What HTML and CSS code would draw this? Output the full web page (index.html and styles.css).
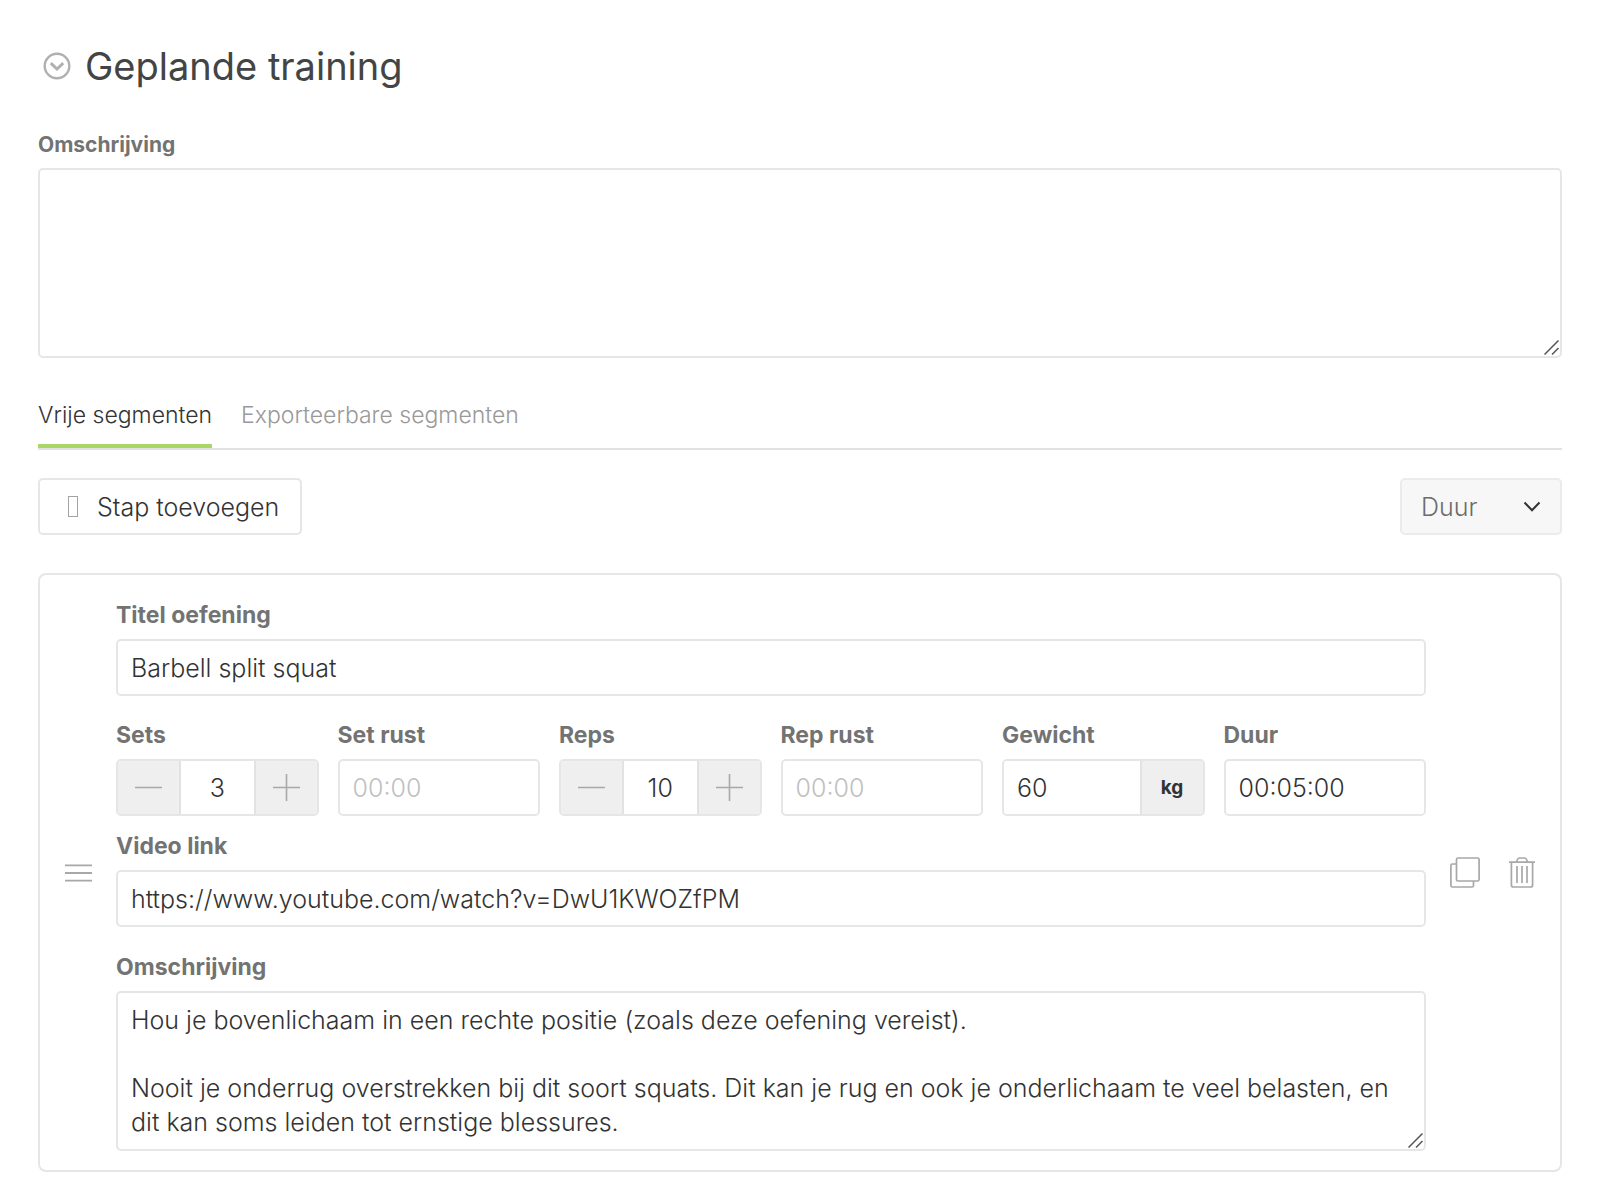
FILE: index.html
```html
<!DOCTYPE html>
<html lang="nl">
<head>
<meta charset="utf-8">
<meta name="viewport" content="width=device-width, initial-scale=1">
<title>Geplande training</title>
<link rel="stylesheet" href="styles.css">
</head>
<body>
<main class="page">
  <header class="heading">
    <button class="icon-button" type="button" aria-label="Inklappen">
      <svg width="28" height="28" viewBox="0 0 28 28" fill="none" stroke="#b0b0b0"><circle cx="14" cy="14" r="12.3" stroke-width="2.4"/><path d="M7.8 11.2l6.2 5.8 6.2-5.8" stroke-width="3"/></svg>
    </button>
    <h1 class="title">Geplande training</h1>
  </header>

  <div class="intro">
    <label class="label label-small" for="intro">Omschrijving</label>
    <div class="area-wrap">
      <textarea class="control area area-intro" id="intro"></textarea>
      <svg class="grip" width="15" height="15" viewBox="0 0 15 15" fill="none" stroke="#555" stroke-width="1.5"><path d="M.5 14.500L14.500.500M8 14.500L14.500 8"/></svg>
    </div>
  </div>

  <nav class="tabs">
    <a class="tab tab-active" href="#vrij">Vrije segmenten</a>
    <a class="tab" href="#exporteerbaar">Exporteerbare segmenten</a>
  </nav>

  <div class="toolbar">
    <button class="add" type="button"><span class="add-icon"></span>Stap toevoegen</button>
    <div class="select-wrap">
      <select class="select" aria-label="Type"><option>Duur</option></select>
      <svg class="chevron" width="18" height="12" viewBox="0 0 18 12" fill="none" stroke="#333" stroke-width="2"><path d="M1.500 1.500L9 9.300l7.500-7.800"/></svg>
    </div>
  </div>

  <section class="card">
    <button class="icon-button" type="button" aria-label="Verplaatsen">
      <svg width="27" height="18" viewBox="0 0 27 18" stroke="#a8a8a8" stroke-width="1.800"><path d="M0 1.300h27M0 9h27M0 16.700h27"/></svg>
    </button>
    <div class="fields">
      <div class="field">
        <label class="label" for="naam">Titel oefening</label>
        <input class="control" id="naam" type="text" value="Barbell split squat">
      </div>
      <div class="metrics">
        <div class="field">
          <label class="label" for="sets">Sets</label>
          <div class="group">
            <button class="step" type="button" aria-label="Minder sets"><svg width="27" height="27" viewBox="0 0 27 27" stroke="#a8a8a8" stroke-width="1.600"><path d="M0 13.500h27"/></svg></button>
            <input class="group-input centered" id="sets" type="text" value="3">
            <button class="step" type="button" aria-label="Meer sets"><svg width="27" height="27" viewBox="0 0 27 27" stroke="#a8a8a8" stroke-width="1.600"><path d="M0 13.500h27M13.500 0v27"/></svg></button>
          </div>
        </div>
        <div class="field">
          <label class="label" for="setrust">Set rust</label>
          <input class="control" id="setrust" type="text" placeholder="00:00">
        </div>
        <div class="field">
          <label class="label" for="reps">Reps</label>
          <div class="group">
            <button class="step" type="button" aria-label="Minder reps"><svg width="27" height="27" viewBox="0 0 27 27" stroke="#a8a8a8" stroke-width="1.600"><path d="M0 13.500h27"/></svg></button>
            <input class="group-input centered" id="reps" type="text" value="10">
            <button class="step" type="button" aria-label="Meer reps"><svg width="27" height="27" viewBox="0 0 27 27" stroke="#a8a8a8" stroke-width="1.600"><path d="M0 13.500h27M13.500 0v27"/></svg></button>
          </div>
        </div>
        <div class="field">
          <label class="label" for="reprust">Rep rust</label>
          <input class="control" id="reprust" type="text" placeholder="00:00">
        </div>
        <div class="field">
          <label class="label" for="gewicht">Gewicht</label>
          <div class="group">
            <input class="group-input" id="gewicht" type="text" value="60">
            <span class="step unit">kg</span>
          </div>
        </div>
        <div class="field">
          <label class="label" for="duur">Duur</label>
          <input class="control" id="duur" type="text" value="00:05:00">
        </div>
      </div>
      <div class="field field-video">
        <label class="label" for="video">Video link</label>
        <input class="control" id="video" type="text" value="https://www.youtube.com/watch?v=DwU1KWOZfPM">
      </div>
      <div class="field">
        <label class="label" for="uitleg">Omschrijving</label>
        <div class="area-wrap">
          <textarea class="control area" id="uitleg" rows="4">Hou je bovenlichaam in een rechte positie (zoals deze oefening vereist).

Nooit je onderrug overstrekken bij dit soort squats. Dit kan je rug en ook je onderlichaam te veel belasten, en dit kan soms leiden tot ernstige blessures.</textarea>
          <svg class="grip" width="15" height="15" viewBox="0 0 15 15" fill="none" stroke="#555" stroke-width="1.5"><path d="M.5 14.500L14.500.500M8 14.500L14.500 8"/></svg>
        </div>
      </div>
    </div>
    <div class="actions">
      <button class="icon-button" type="button" aria-label="Kopiëren">
        <svg width="30" height="31" viewBox="0 0 30 31" fill="none" stroke="#a8a8a8" stroke-width="1.700"><rect x="6.500" y="1" width="22.600" height="23" rx="1.500"/><path d="M6.500 7H2.400Q.900 7 .900 8.500V28.500Q.900 30 2.400 30H22Q23.500 30 23.500 28.500V24"/></svg>
      </button>
      <button class="icon-button" type="button" aria-label="Verwijderen">
        <svg width="26" height="31" viewBox="0 0 26 31" fill="none" stroke="#a8a8a8" stroke-width="1.700"><path d="M0 5.200h26M2.400 5.200V28Q2.400 30 4.400 30H21.600Q23.600 30 23.600 28V5.200M7.500 5.200Q8.500 1 10.500 1H15.500Q17.500 1 18.500 5.200M8 9v17M13 9v17M18 9v17"/></svg>
      </button>
    </div>
  </section>
</main>
</body>
</html>
```
FILE: styles.css
```css
*, *::before, *::after { box-sizing: border-box; }

body {
  margin: 0;
  background: #fff;
  color: #333;
  font-family: Inter, "Liberation Sans", sans-serif;
  font-size: 25px;
  font-weight: 300;
  line-height: 34px;
}

button, input, select, textarea { font: inherit; color: inherit; margin: 0; }

.page { padding: 41px 38px 19px; }

.heading { display: flex; align-items: center; gap: 14px; padding-left: 5px; }
.title { margin: 0; color: #444; font-size: 38px; font-weight: 400; line-height: 50px; }

.icon-button { display: flex; flex: none; padding: 0; border: 0; background: none; cursor: pointer; }

.intro { margin-top: 39px; }

.label { display: block; margin-bottom: 9px; color: #737373; font-size: 23px; font-weight: 700; line-height: 30px; }
.label-small { margin-bottom: 8px; font-size: 21px; }

.control {
  display: block;
  width: 100%;
  height: 57px;
  padding: 0 13px;
  border: 2px solid #e6e6e6;
  border-radius: 5px;
  background: #fff;
  outline: 0;
}
.control::placeholder { color: #c0c0c0; opacity: 1; }

.area-wrap { position: relative; }
.area { height: auto; padding: 10px 13px; overflow: hidden; resize: none; }
.area-intro { height: 190px; }
.grip { position: absolute; right: 3px; bottom: 3px; }

.tabs { display: flex; gap: 29px; margin-top: 34px; border-bottom: 2px solid #e2e2e2; font-size: 23px; }
.tab { padding: 6px 0 12px; border-bottom: 4px solid transparent; color: #999; text-decoration: none; }
.tab-active { border-color: #aad667; color: #333; }

.toolbar { display: flex; justify-content: space-between; margin-top: 28px; }
.add {
  display: flex;
  align-items: center;
  height: 57px;
  padding: 0 21px 0 28px;
  border: 2px solid #e6e6e6;
  border-radius: 5px;
  background: #fff;
}
.add-icon { width: 10px; height: 21px; margin-right: 19px; border: 1px solid #a3a3a3; }

.select-wrap { position: relative; width: 162px; }
.select {
  appearance: none;
  width: 100%;
  height: 57px;
  padding: 0 19px;
  border: 2px solid #ebebeb;
  border-radius: 5px;
  background: #f7f7f7;
  color: #6c6c6c;
}
.chevron { position: absolute; top: 23px; right: 21px; pointer-events: none; }

.card {
  display: grid;
  grid-template-columns: auto 1fr auto;
  align-items: center;
  gap: 24px;
  margin-top: 38px;
  padding: 0 25px;
  border: 2px solid #e6e6e6;
  border-radius: 8px;
}
.fields { padding: 25px 0 19px; }
.metrics { display: grid; grid-template-columns: repeat(6, minmax(0, 1fr)); gap: 19px; margin: 24px 0 15px; }
.field-video { margin-bottom: 25px; }

.group { display: flex; height: 57px; border: 2px solid #e6e6e6; border-radius: 5px; overflow: hidden; }
.group-input { flex: 1; min-width: 0; padding: 0 13px; border: 0; background: #fff; outline: 0; }
.centered { padding: 0; text-align: center; }
.step {
  display: flex;
  flex: none;
  align-items: center;
  justify-content: center;
  width: 63px;
  padding: 0;
  border: 0 solid #e2e2e2;
  background: #efefef;
}
.step:first-child { border-right-width: 2px; }
.step:last-child { border-left-width: 2px; }
.unit { font-size: 19px; font-weight: 700; }

.actions { display: flex; gap: 29px; }
```
